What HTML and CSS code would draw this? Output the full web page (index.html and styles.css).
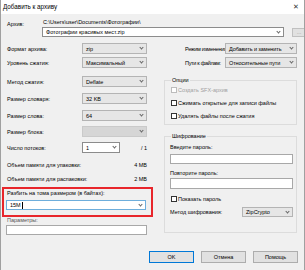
FILE: index.html
```html
<!DOCTYPE html>
<html lang="ru">
<head>
  <meta charset="UTF-8" />
  <title>Добавить к архиву</title>
  <link rel="stylesheet" href="styles.css">
</head>
<body>
  <div class="dialog">
    <div class="titlebar">
      <span>Добавить к архиву</span>
      <span class="close">✕</span>
    </div>

    <div class="content">
      <!-- archive name -->
      <div class="archive">
        <span class="archive-lbl">Архив:</span>
        <div>
          <div class="path">C:\Users\user\Documents\Фотографии\</div>
          <div class="combo edit">Фотографии красивых мест.zip<i class="arrow"></i></div>
        </div>
        <button class="browse">...</button>
      </div>

      <div class="columns">
        <!-- left column -->
        <div class="left">
          <div class="row r-format"><span>Формат архива:</span><div class="combo">zip<i class="arrow"></i></div></div>
          <div class="row r-level"><span>Уровень сжатия:</span><div class="combo">Максимальный<i class="arrow"></i></div></div>
          <div class="row r-method"><span>Метод сжатия:</span><div class="combo">Deflate<i class="arrow"></i></div></div>
          <div class="row r-next"><span>Размер словаря:</span><div class="combo">32 KB<i class="arrow"></i></div></div>
          <div class="row r-next"><span>Размер слова:</span><div class="combo">64<i class="arrow"></i></div></div>
          <div class="row r-block"><span>Размер блока:</span><div class="combo disabled"><i class="arrow"></i></div></div>
          <div class="row threads r-block"><span>Число потоков:</span><div class="combo edit">1<i class="arrow"></i></div><span class="num">/ 1</span></div>
          <div class="mem mem-pack"><span>Объем памяти для упаковки:</span><span>4 MB</span></div>
          <div class="mem mem-unpack"><span>Объем памяти для распаковки:</span><span>2 MB</span></div>

          <div class="split">
            <div class="split-lbl">Разбить на тома размером (в байтах):</div>
            <div class="combo edit focus">15M<b class="caret"></b><i class="arrow"></i></div>
          </div>

          <div class="params-lbl">Параметры:</div>
          <div class="field"></div>
        </div>

        <!-- right column -->
        <div class="right">
          <div class="rrow r-format"><span>Режим изменения:</span><div class="combo">Добавить и заменить<i class="arrow"></i></div></div>
          <div class="rrow r-level"><span>Пути к файлам:</span><div class="combo">Относительные пути<i class="arrow"></i></div></div>

          <fieldset class="group options">
            <legend>Опции</legend>
            <label class="check disabled"><i class="box"></i>Создать SFX-архив</label>
            <label class="check"><i class="box"></i>Сжимать открытые для записи файлы</label>
            <label class="check"><i class="box"></i>Удалять файлы после сжатия</label>
          </fieldset>

          <fieldset class="group crypt">
            <legend>Шифрование</legend>
            <div class="pw-lbl">Введите пароль:</div>
            <div class="field pw"></div>
            <div class="pw-lbl second">Повторите пароль:</div>
            <div class="field pw tall"></div>
            <label class="check show"><i class="box"></i>Показать пароль</label>
            <div class="crow"><span>Метод шифрования:</span><div class="combo">ZipCrypto<i class="arrow"></i></div></div>
          </fieldset>
        </div>
      </div>

      <div class="buttons">
        <button class="btn default">OK</button>
        <button class="btn">Отмена</button>
        <button class="btn">Помощь</button>
      </div>
    </div>
  </div>
</body>
</html>
```

FILE: styles.css
```css
*{box-sizing:border-box;margin:0;padding:0}
body{font-family:"Liberation Sans",Arial,sans-serif;font-size:5.5px;line-height:6px;color:#000;background:#fff}
button{font:inherit;color:inherit}

.dialog{width:305px;height:270px;background:#f0f0f0;border-left:1px solid #a0a0a0;border-right:1px solid #a0a0a0;overflow:hidden}
.titlebar{height:14px;background:#fff;display:flex;justify-content:space-between;align-items:center;
          padding:0 5px 1px 2px;font-size:6.3px}
.close{font-size:7px;color:#333}
.content{padding:0 6px 0 5px}

/* archive */
.archive{display:grid;grid-template-columns:28px 242px 14px;column-gap:8px;margin-top:5px}
.archive-lbl{margin:2px 0 0 1px}
.path{height:6px;margin-left:1px}
.combo{height:11px;display:flex;align-items:center;justify-content:space-between;padding:0 3px 0 3px;
       background:#e6e6e6;border:1px solid #b4b4b4;white-space:nowrap}
.combo.edit{background:#fff;border-color:#8c8c8c}
.archive .combo{height:10px;margin-top:2px}
.combo.disabled{background:#d6d6d6;border-color:#cacaca}
.combo.focus{border-color:#6eaedc}
.arrow{width:3px;height:3px;border-right:1px solid #666;border-bottom:1px solid #666;transform:rotate(45deg);
       margin:-2px 0 0 auto;flex:none}
.caret{width:1px;height:7px;background:#000;margin-left:1px}
.browse{height:9px;margin-top:9px;background:#e1e1e1;border:1px solid #c0c0c0;color:#999;line-height:5px}

.columns{display:grid;grid-template-columns:141px 133px;column-gap:17px;margin-top:6px}

/* left column */
.row{display:grid;grid-template-columns:76px 65px;align-items:center;height:11px}
.row span{padding-left:1px}
.r-level{margin-top:3px}
.r-method{margin-top:8px}
.r-next{margin-top:6px}
.r-block{margin-top:5px}
.row.threads{grid-template-columns:76px 38px 1fr}
.num{text-align:right}
.mem{display:flex;justify-content:space-between;height:10px;align-items:center;padding-left:1px}
.mem-pack{margin-top:7px}
.mem-unpack{margin-top:4px}

.split{margin:3px -6px 0 -4px;border:2px solid #e8262b;padding:1px 5px 5px 2px}
.split-lbl{height:6px;margin-left:1px}
.split .combo{height:10px;margin-top:4px}
.params-lbl{height:6px;margin:0 0 0 1px;color:#555}
.field{height:10px;background:#fff;border:1px solid #a8a8a8;margin-top:2px}

/* right column */
.rrow{display:grid;grid-template-columns:21px 40px 72px;align-items:center;height:11px}
.rrow span{grid-column:2;white-space:nowrap;letter-spacing:-.3px}
.rrow .combo{letter-spacing:-.1px}
.group{border:1px solid #dcdcdc;padding:0 3px 0 5px}
.group legend{margin-left:1px;padding:0 1px;height:6px}
.options{margin-top:9px;padding-bottom:4px}
.check{display:flex;align-items:center;height:8px;margin-top:5px;padding-left:1px;white-space:nowrap}
.options .check:first-of-type{margin-top:3px}
.box{width:6px;height:6px;border:1px solid #333;background:#fff;margin-right:1px;flex:none}
.check.disabled{color:#a0a0a0}
.check.disabled .box{border-color:#bcbcbc}
.crypt{margin-top:8px;padding-bottom:15px}
.pw-lbl{height:6px;margin-top:5px}
.pw-lbl.second{margin-top:6px}
.field.pw{margin-top:4px}
.field.tall{height:11px;margin-top:2px}
.check.show{margin-top:6px}
.crow{display:grid;grid-template-columns:72px 51px;align-items:center;margin-top:4px}
.crow .combo{height:10px}

/* buttons */
.buttons{display:flex;justify-content:flex-end;gap:7px;margin-top:16px}
.btn{width:45px;height:12px;background:#e1e1e1;border:1px solid #adadad}
.btn.default{border-color:#0078d7}
```
